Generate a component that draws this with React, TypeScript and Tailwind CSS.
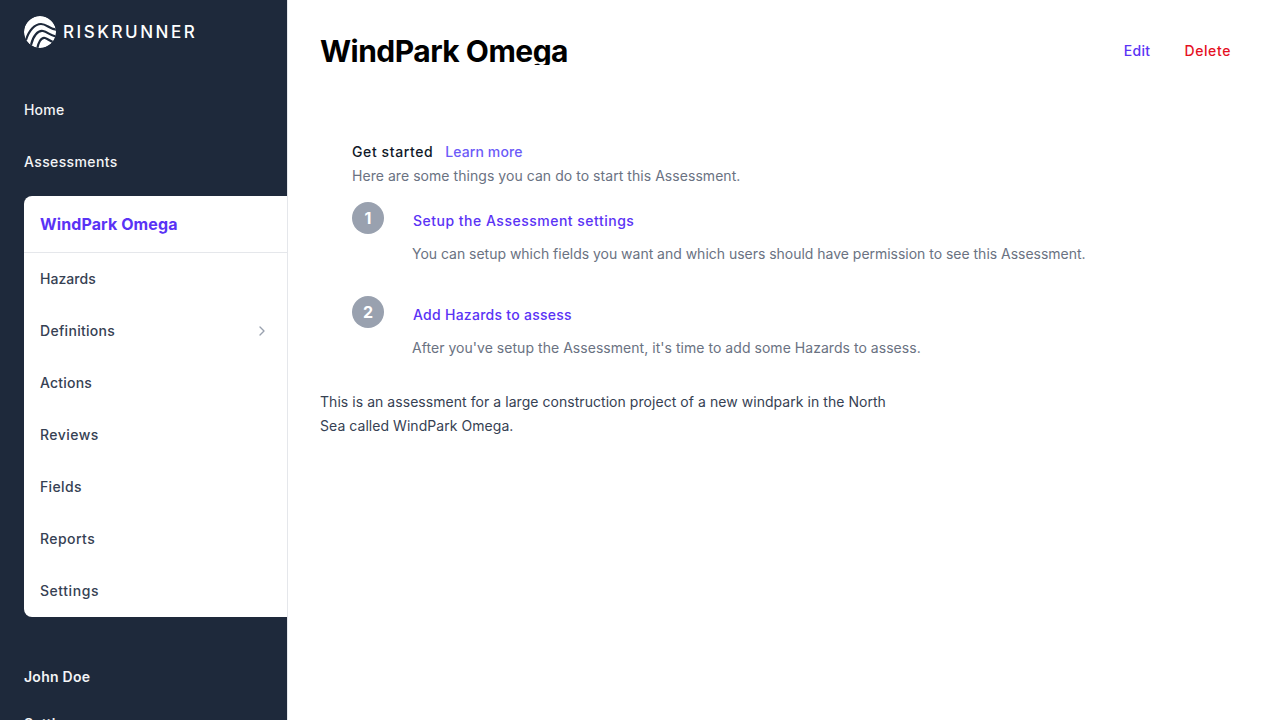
import { ChevronRight } from 'lucide-react';

const projectLinks = [
  { label: 'Hazards', tracking: 'tracking-[0.05px]' },
  { label: 'Definitions', tracking: 'tracking-[0.3px]' },
  { label: 'Actions', tracking: 'tracking-[0.2px]' },
  { label: 'Reviews', tracking: 'tracking-[0.45px]' },
  { label: 'Fields', tracking: 'tracking-[0.35px]' },
  { label: 'Reports', tracking: 'tracking-[0.45px]' },
  { label: 'Settings', tracking: 'tracking-[0.55px]' },
];

function Logo() {
  return (
    <svg width="32" height="32" viewBox="0 0 32 32" className="shrink-0">
      <defs>
        <clipPath id="logo-disc">
          <circle cx="16" cy="16" r="16" />
        </clipPath>
      </defs>
      <g clipPath="url(#logo-disc)">
        <circle cx="16" cy="16" r="16" fill="#fff" />
        <g fill="none" stroke="#1e293b" strokeWidth="2.2">
          <path d="M2 24C5 14 11 8 17 8C23 8 25 13 34 14" />
          <path d="M7 29C9 20 14 14 19 15C24 16 26 20 34 21" />
          <path d="M13 34C14 27 17 21 21 22C25 23 27 27 34 27" />
        </g>
      </g>
    </svg>
  );
}

export default function App() {
  return (
    <div className="flex h-screen overflow-hidden bg-white font-['Inter',sans-serif]">
      {/* Sidebar */}
      <aside className="w-[288px] shrink-0 h-full overflow-hidden bg-[#1e293b] border-r border-gray-200">
        <div className="flex items-center gap-[7px] pl-6 h-[64px]">
          <Logo />
          <span className="text-white text-[17px] font-medium tracking-[2.55px] leading-none">RISKRUNNER</span>
        </div>
        <nav className="pt-5 pl-6">
          <a className="flex items-center h-[52px] text-sm font-medium tracking-[0.2px] text-gray-100">Home</a>
          <a className="flex items-center h-[52px] text-sm font-medium tracking-[0.38px] text-gray-100">Assessments</a>
          <div className="mt-2 bg-white rounded-l-lg">
            <div className="flex items-center h-[57px] pl-4 border-b border-gray-200 text-base font-bold tracking-[0.1px] text-[#5a33f5]">WindPark Omega</div>
            <div>
              {projectLinks.map((link) => (
                <a key={link.label} className={`flex items-center justify-between h-[52px] pl-4 pr-[17px] text-sm font-medium text-gray-700 ${link.tracking}`}>
                  {link.label}
                  {link.label === 'Definitions' && <ChevronRight className="w-4 h-4 text-gray-400" />}
                </a>
              ))}
            </div>
          </div>
          <div className="mt-[34px]">
            <a className="flex items-center h-[52px] text-sm font-semibold tracking-[0.25px] text-gray-100">John Doe</a>
            <a className="flex items-center h-[42px] text-sm font-semibold tracking-[0.2px] text-gray-100">Settings</a>
          </div>
        </nav>
      </aside>

      {/* Main */}
      <main className="flex-1 pl-8 pr-[49px]">
        <header className="flex items-center justify-between pt-[34px]">
          <h1 className="text-3xl font-bold tracking-[-0.52px] text-black h-[31px] leading-[34px] overflow-hidden">WindPark Omega</h1>
          <div className="flex items-center gap-[34px] text-sm font-medium pt-[2px]">
            <a className="tracking-wide text-[#5a33f5]">Edit</a>
            <a className="tracking-[0.6px] text-[#e5101f]">Delete</a>
          </div>
        </header>

        <section className="pl-8 pt-[75px]">
          <div className="flex items-center gap-3 h-6 text-sm font-medium">
            <span className="tracking-[0.6px] text-gray-900">Get started</span>
            <a className="tracking-[0.1px] text-[#6c5bf8]">Learn more</a>
          </div>
          <p className="text-sm leading-6 tracking-[0.05px] text-gray-500">Here are some things you can do to start this Assessment.</p>

          <div className="mt-[14px]">
            <div className="flex gap-7 h-[94px]">
              <div className="flex items-center justify-center w-8 h-8 rounded-full bg-gray-400 text-white font-bold shrink-0">1</div>
              <div>
                <a className="block pl-px pt-[9px] text-sm leading-5 font-medium tracking-[0.5px] text-[#5a33f5]">Setup the Assessment settings</a>
                <p className="mt-[13px] text-sm leading-5 tracking-[-0.02px] text-gray-500">You can setup which fields you want and which users should have permission to see this Assessment.</p>
              </div>
            </div>
            <div className="flex gap-7 h-[94px]">
              <div className="flex items-center justify-center w-8 h-8 rounded-full bg-gray-400 text-white font-bold shrink-0">2</div>
              <div>
                <a className="block pl-px pt-[9px] text-sm leading-5 font-medium tracking-[0.27px] text-[#5a33f5]">Add Hazards to assess</a>
                <p className="mt-[13px] text-sm leading-5 tracking-[0.04px] text-gray-500">After you've setup the Assessment, it's time to add some Hazards to assess.</p>
              </div>
            </div>
          </div>
        </section>

        <p className="max-w-[576px] text-sm leading-6 tracking-[0.05px] text-gray-700">
          This is an assessment for a large construction project of a new windpark in the North Sea called WindPark Omega.
        </p>
      </main>
    </div>
  );
}
